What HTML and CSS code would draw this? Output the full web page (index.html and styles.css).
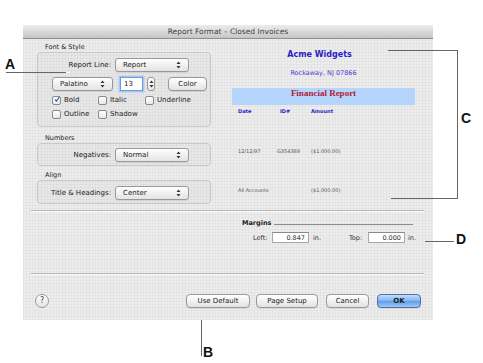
FILE: index.html
```html
<!DOCTYPE html>
<html lang="en">
<head>
    <meta charset="UTF-8">
    <meta name="viewport" content="width=device-width, initial-scale=1.0">
    <title>Report Format - Closed Invoices</title>
    <link rel="stylesheet" href="styles.css">
</head>
<body>
<div class="stage">
    <div class="window">
        <div class="titlebar">Report Format – Closed Invoices</div>

        <div class="main">
            <!-- left column: settings groups -->
            <div class="settings">
                <div class="group-label first">Font &amp; Style</div>
                <div class="group font-group">
                    <div class="row">
                        <span class="field-label">Report Line:</span>
                        <div class="popup wide">Report
                            <svg class="arrows" width="5" height="8" viewBox="0 0 5 8"><polygon points="0.5,3 4.5,3 2.5,0.5" fill="#333"/><polygon points="0.5,5 4.5,5 2.5,7.5" fill="#333"/></svg>
                        </div>
                    </div>
                    <div class="row font-row">
                        <div class="popup font-popup">Palatino
                            <svg class="arrows" width="5" height="8" viewBox="0 0 5 8"><polygon points="0.5,3 4.5,3 2.5,0.5" fill="#333"/><polygon points="0.5,5 4.5,5 2.5,7.5" fill="#333"/></svg>
                        </div>
                        <div class="size-field">13</div>
                        <div class="stepper">
                            <svg width="5" height="8" viewBox="0 0 5 8"><polygon points="0.5,3 4.5,3 2.5,0.5" fill="#333"/><polygon points="0.5,5 4.5,5 2.5,7.5" fill="#333"/></svg>
                        </div>
                        <div class="button color-btn">Color</div>
                    </div>
                    <div class="checks">
                        <span class="check"><span class="box checked"><svg width="9" height="9" viewBox="0 0 9 9"><path d="M1.5 4.5 L3.6 7 L8.2 0.8" fill="none" stroke="#1f4fa8" stroke-width="1.6"/></svg></span>Bold</span>
                        <span class="check"><span class="box"></span>Italic</span>
                        <span class="check"><span class="box"></span>Underline</span>
                        <span class="check"><span class="box"></span>Outline</span>
                        <span class="check"><span class="box"></span>Shadow</span>
                    </div>
                </div>

                <div class="group-label numbers">Numbers</div>
                <div class="group small-group">
                    <div class="row">
                        <span class="field-label">Negatives:</span>
                        <div class="popup wide">Normal
                            <svg class="arrows" width="5" height="8" viewBox="0 0 5 8"><polygon points="0.5,3 4.5,3 2.5,0.5" fill="#333"/><polygon points="0.5,5 4.5,5 2.5,7.5" fill="#333"/></svg>
                        </div>
                    </div>
                </div>

                <div class="group-label align">Align</div>
                <div class="group small-group align-group">
                    <div class="row">
                        <span class="field-label">Title &amp; Headings:</span>
                        <div class="popup wide">Center
                            <svg class="arrows" width="5" height="8" viewBox="0 0 5 8"><polygon points="0.5,3 4.5,3 2.5,0.5" fill="#333"/><polygon points="0.5,5 4.5,5 2.5,7.5" fill="#333"/></svg>
                        </div>
                    </div>
                </div>
            </div>

            <!-- right column: report preview -->
            <div class="preview">
                <div class="company">Acme Widgets</div>
                <div class="address">Rockaway, NJ 07866</div>
                <div class="band">Financial Report</div>
                <div class="cols heads">
                    <span class="c1">Date</span><span class="c2">ID#</span><span>Amount</span>
                </div>
                <div class="cols line1">
                    <span class="c1">12/12/97</span><span class="c2b">G354389</span><span>($1,000.00)</span>
                </div>
                <div class="cols line2">
                    <span class="c1 c12">All Accounts</span><span>($1,000.00)</span>
                </div>
            </div>
        </div>

        <div class="separator"></div>

        <div class="margins">
            <div class="margins-title"><span>Margins</span><span class="rule"></span></div>
            <div class="margins-row">
                <span class="m-label">Left:</span>
                <span class="num-field">0.847</span>
                <span class="unit">in.</span>
                <span class="m-label">Top:</span>
                <span class="num-field">0.000</span>
                <span class="unit last">in.</span>
            </div>
        </div>

        <div class="separator"></div>

        <div class="footer">
            <div class="help">?</div>
            <div class="button b-default">Use Default</div>
            <div class="button b-setup">Page Setup</div>
            <div class="button b-cancel">Cancel</div>
            <div class="button b-ok">OK</div>
        </div>
    </div>

    <!-- callouts -->
    <span class="callout label-a">A</span>
    <span class="lead lead-a"></span>
    <span class="callout label-b">B</span>
    <span class="lead lead-b"></span>
    <span class="callout label-c">C</span>
    <span class="bracket-c"></span>
    <span class="lead lead-c-bottom"></span>
    <span class="callout label-d">D</span>
    <span class="lead lead-d"></span>
</div>
</body>
</html>
```

FILE: styles.css
```css
* {
    box-sizing: border-box;
}
body {
    margin: 0;
    background: #fff;
    font-family: "DejaVu Sans", "Liberation Sans", sans-serif;
    color: #222;
}
.stage {
    position: relative;
    width: 483px;
    height: 363px;
    padding: 25px 0 0 23px;
    overflow: hidden;
}
.window {
    width: 410px;
    height: 295px;
    display: flex;
    flex-direction: column;
    background-color: #ededed;
    background-image:
        linear-gradient(rgba(0, 0, 0, 0.03) 1px, transparent 1px),
        linear-gradient(90deg, rgba(0, 0, 0, 0.03) 1px, transparent 1px);
    background-size: 3px 3px;
}
.titlebar {
    height: 14px;
    line-height: 13px;
    font-size: 7.5px;
    text-align: center;
    color: #444;
    background: linear-gradient(#ececec, #c6c6c6);
    border-bottom: 1px solid #8e8e8e;
}

/* top area */
.main {
    height: 171px;
    display: flex;
}
.settings {
    width: 174px;
    margin-left: 14px;
}
.group-label {
    height: 10px;
    line-height: 10px;
    font-size: 6.5px;
    padding-left: 8px;
    color: #222;
}
.group-label.first { margin-top: 3px; }
.group-label.numbers { margin-top: 6px; }
.group-label.align { margin-top: 4px; }
.group {
    border: 1px solid #c9c9c9;
    border-radius: 4px;
    background: rgba(0, 0, 0, 0.018);
}
.font-group {
    height: 75px;
    padding-top: 5px;
}
.small-group {
    height: 23px;
    padding-top: 4px;
}
.align-group {
    height: 24px;
    padding-top: 5px;
}
.row {
    display: flex;
    align-items: center;
    height: 14px;
}
.field-label {
    width: 73px;
    text-align: right;
    font-size: 7px;
    margin-right: 4px;
    white-space: nowrap;
}
.popup {
    position: relative;
    height: 14px;
    line-height: 12px;
    padding-left: 7px;
    font-size: 7px;
    border: 1px solid #999;
    border-radius: 3px;
    background: linear-gradient(#ffffff, #f0f0f0 50%, #e4e4e4);
    box-shadow: 0 1px 0 rgba(0, 0, 0, 0.08);
}
.popup .arrows {
    position: absolute;
    right: 7px;
    top: 2px;
}
.popup.wide { width: 74px; }
.font-row {
    margin-top: 5px;
    padding-left: 14px;
}
.font-popup { width: 61px; }
.size-field {
    width: 23px;
    height: 14px;
    margin-left: 7px;
    padding-left: 3px;
    font-size: 7px;
    line-height: 12px;
    background: #fff;
    border: 1px solid #6c9be0;
    box-shadow: 0 0 0 1.5px #a8c8f2;
}
.stepper {
    width: 8px;
    height: 14px;
    margin-left: 4px;
    border: 1px solid #999;
    border-radius: 3px;
    background: linear-gradient(#fff, #e6e6e6);
    display: flex;
    align-items: center;
    justify-content: center;
}
.button {
    height: 14px;
    line-height: 12px;
    font-size: 7px;
    text-align: center;
    color: #222;
    border: 1px solid #999;
    border-radius: 4px;
    background: linear-gradient(#ffffff, #f2f2f2 50%, #e2e2e2);
    box-shadow: 0 1px 0 rgba(0, 0, 0, 0.08);
}
.color-btn {
    width: 39px;
    margin-left: 13px;
}
.checks {
    display: grid;
    grid-template-columns: 46px 47px auto;
    grid-auto-rows: 10px;
    row-gap: 4px;
    margin-top: 4px;
    padding-left: 14px;
}
.check {
    display: flex;
    align-items: center;
    font-size: 7px;
}
.box {
    width: 9px;
    height: 9px;
    margin-right: 3px;
    border: 1px solid #8a8a8a;
    border-radius: 2px;
    background: linear-gradient(#fff, #e8e8e8);
    display: flex;
    align-items: center;
    justify-content: center;
    overflow: visible;
}
.box svg {
    margin-top: -2px;
    margin-left: 1px;
}

/* report preview */
.preview {
    width: 183px;
    margin-left: 21px;
}
.company {
    margin-top: 10px;
    height: 12px;
    line-height: 12px;
    text-align: center;
    margin-right: 8px;
    font-weight: bold;
    font-size: 8px;
    color: #2a1dc7;
}
.address {
    margin-top: 7px;
    height: 10px;
    line-height: 10px;
    text-align: center;
    font-size: 6.5px;
    color: #4b3ccc;
}
.band {
    margin-top: 10px;
    height: 17px;
    line-height: 11px;
    text-align: center;
    font-family: "Liberation Serif", serif;
    font-weight: bold;
    font-size: 9px;
    color: #b02033;
    background: #b5d5fc;
}
.cols {
    display: flex;
    height: 8px;
    line-height: 8px;
    padding-left: 6px;
    font-size: 5px;
    color: #555;
}
.cols .c1 { width: 42px; }
.cols .c2 { width: 31px; }
.cols .c2b { width: 34px; margin-left: -3px; }
.cols .c12 { width: 73px; }
.heads {
    margin-top: 2px;
    font-weight: bold;
    color: #2a1dc7;
}
.line1 { margin-top: 32px; }
.line2 { margin-top: 31px; }

.separator {
    height: 1px;
    margin: 0 9px 0 8px;
    background: #b4b4b4;
    box-shadow: 0 1px 0 #fbfbfb;
}

/* margins */
.margins {
    height: 62px;
    padding-left: 219px;
}
.margins-title {
    display: flex;
    align-items: center;
    width: 171px;
    height: 10px;
    margin-top: 7px;
    font-size: 6.5px;
    font-weight: bold;
    color: #222;
}
.margins-title .rule {
    flex: 1;
    height: 1px;
    margin: 3px 0 0 3px;
    background: #8c8c8c;
}
.margins-row {
    display: flex;
    align-items: center;
    height: 11px;
    margin-top: 4px;
    padding-left: 11px;
    font-size: 6.5px;
    color: #333;
}
.m-label { width: 19px; }
.num-field {
    width: 37px;
    height: 11px;
    line-height: 10px;
    padding-right: 3px;
    text-align: right;
    background: #fff;
    border: 1px solid #a6a6a6;
    border-top-color: #8a8a8a;
}
.unit {
    width: 40px;
    padding-left: 4px;
}
.unit.last { width: auto; padding-left: 3px; }

/* footer buttons */
.footer {
    height: 46px;
    display: flex;
    align-items: flex-start;
    padding: 20px 0 0 12px;
}
.help {
    width: 14px;
    height: 14px;
    border-radius: 50%;
    border: 1px solid #999;
    background: linear-gradient(#fff, #e4e4e4);
    font-size: 8px;
    line-height: 12px;
    text-align: center;
    color: #444;
}
.b-default { width: 64px; margin-left: 137px; }
.b-setup { width: 62px; margin-left: 6px; }
.b-cancel { width: 43px; margin-left: 8px; }
.b-ok {
    width: 44px;
    margin-left: 8px;
    font-weight: bold;
    border-color: #4b6fae;
    background: linear-gradient(#c4ddfa, #7fb3f0 50%, #5d9ce8 51%, #9fcaf6);
}

/* callouts over the screenshot */
.callout {
    position: absolute;
    font-family: "Liberation Sans", sans-serif;
    font-weight: bold;
    font-size: 14px;
    line-height: 14px;
    color: #111;
}
.label-a { left: 5px; top: 57px; }
.label-b { left: 203px; top: 345px; }
.label-c { left: 461px; top: 111px; }
.label-d { left: 456px; top: 232px; }
.lead {
    position: absolute;
    background: #666;
}
.lead-a {
    left: 6px;
    top: 72px;
    width: 64px;
    height: 1px;
    background: linear-gradient(90deg, #666 60px, #fff 60px);
}
.lead-b {
    left: 201px;
    top: 320px;
    width: 1px;
    height: 36px;
}
.lead-d {
    left: 425px;
    top: 241px;
    width: 29px;
    height: 1px;
}
.bracket-c {
    position: absolute;
    left: 388px;
    top: 50px;
    width: 70px;
    height: 148px;
    border: 1px solid #666;
    border-left: none;
    border-bottom: none;
}
.lead-c-bottom {
    left: 391px;
    top: 198px;
    width: 67px;
    height: 1px;
}
```
